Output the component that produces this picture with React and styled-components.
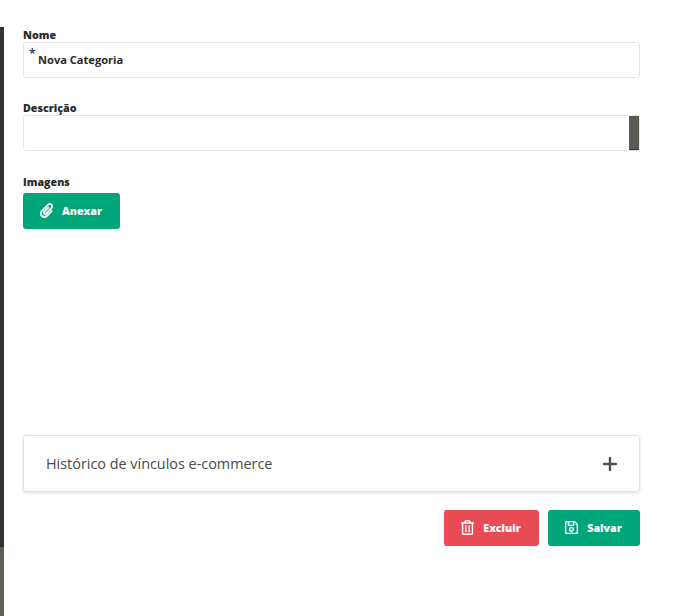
import React from 'react';
import styled, { createGlobalStyle } from 'styled-components';
import { FaPaperclip, FaRegTrashAlt, FaRegSave } from 'react-icons/fa';

const GlobalStyle = createGlobalStyle`
  html, body {
    margin: 0;
    padding: 0;
    background: #fff;
    font-family: "Open Sans", "Liberation Sans", sans-serif;
  }
`;

const Page = styled.div`
  display: flex;
  width: 674px;
  height: 616px;
  overflow: hidden;
`;

const Rail = styled.div`
  display: flex;
  flex-direction: column;
  flex: none;
  width: 4px;
  margin-top: 27px;
`;

const RailTop = styled.div`
  flex: 1;
  background: #33332d;
`;

const RailBottom = styled.div`
  height: 69px;
  background: #5e5e56;
`;

const Main = styled.main`
  display: flex;
  flex-direction: column;
  width: 617px;
  margin-left: 19px;
  padding-top: 27px;
`;

const Field = styled.div`
  display: flex;
  flex-direction: column;
  margin-bottom: ${(p) => p.$gap}px;
`;

const Label = styled.label`
  height: 15px;
  margin-bottom: ${(p) => p.$spacing || 0}px;
  font-size: 10.7px;
  line-height: 17px;
  font-weight: 800;
  color: #2b2b27;
`;

const InputBox = styled.div`
  position: relative;
  display: flex;
  align-items: center;
  box-sizing: border-box;
  height: 36px;
  padding: 0 0 2px 14px;
  border: 1px solid #e6e6e6;
  border-radius: 3px;
  font-size: 11.1px;
  font-weight: 700;
  color: #2b2b27;
`;

const Required = styled.span`
  position: absolute;
  left: 5px;
  top: 4px;
  font-size: 12px;
  line-height: 14px;
  font-weight: 600;
`;

const Scrollbar = styled.div`
  position: absolute;
  top: 0;
  right: 0;
  bottom: 0;
  width: 10px;
  background: #5b5b53;
  border-bottom: 1px solid #33332d;
`;

const Button = styled.button`
  display: flex;
  align-items: center;
  justify-content: center;
  gap: 8px;
  box-sizing: border-box;
  width: ${(p) => p.$width}px;
  height: 36px;
  padding: 0 2px 1px 0;
  border: 0;
  border-radius: 3px;
  background: ${(p) => p.$color};
  color: #fff;
  font-family: inherit;
  font-size: 10.7px;
  font-weight: 800;
  svg {
    flex: none;
  }
`;

const Attachments = styled.div`
  height: 206px;
`;

const Accordion = styled.div`
  display: flex;
  align-items: center;
  justify-content: space-between;
  box-sizing: border-box;
  height: 57px;
  padding: 0 22px;
  border: 1px solid #e2e2e2;
  border-radius: 3px;
  box-shadow: 0 1px 3px rgba(0, 0, 0, 0.12);
`;

const AccordionTitle = styled.span`
  font-size: 14.4px;
  color: #4a4a46;
`;

const PlusIcon = styled.svg`
  width: 14px;
  height: 14px;
`;

const Actions = styled.div`
  display: flex;
  justify-content: flex-end;
  gap: 9px;
  margin-top: 18px;
`;

export default function App() {
  return (
    <>
      <GlobalStyle />
      <Page>
        <Rail>
          <RailTop />
          <RailBottom />
        </Rail>
        <Main>
          <Field $gap={22}>
            <Label>Nome</Label>
            <InputBox>
              <Required>*</Required>
              Nova Categoria
            </InputBox>
          </Field>
          <Field $gap={23}>
            <Label>Descrição</Label>
            <InputBox>
              <Scrollbar />
            </InputBox>
          </Field>
          <Field $gap={0}>
            <Label $spacing={4}>Imagens</Label>
            <Button $color="#00a67a" $width={97}>
              <FaPaperclip size={15} />
              Anexar
            </Button>
          </Field>
          <Attachments />
          <Accordion>
            <AccordionTitle>Histórico de vínculos e-commerce</AccordionTitle>
            <PlusIcon viewBox="0 0 14 14">
              <path d="M7 1v12M1 7h12" stroke="#4f4f49" strokeWidth="2.4" strokeLinecap="round" />
            </PlusIcon>
          </Accordion>
          <Actions>
            <Button $color="#e94b55" $width={95}>
              <FaRegTrashAlt size={15} />
              Excluir
            </Button>
            <Button $color="#00a67a" $width={92}>
              <FaRegSave size={15} />
              Salvar
            </Button>
          </Actions>
        </Main>
      </Page>
    </>
  );
}
